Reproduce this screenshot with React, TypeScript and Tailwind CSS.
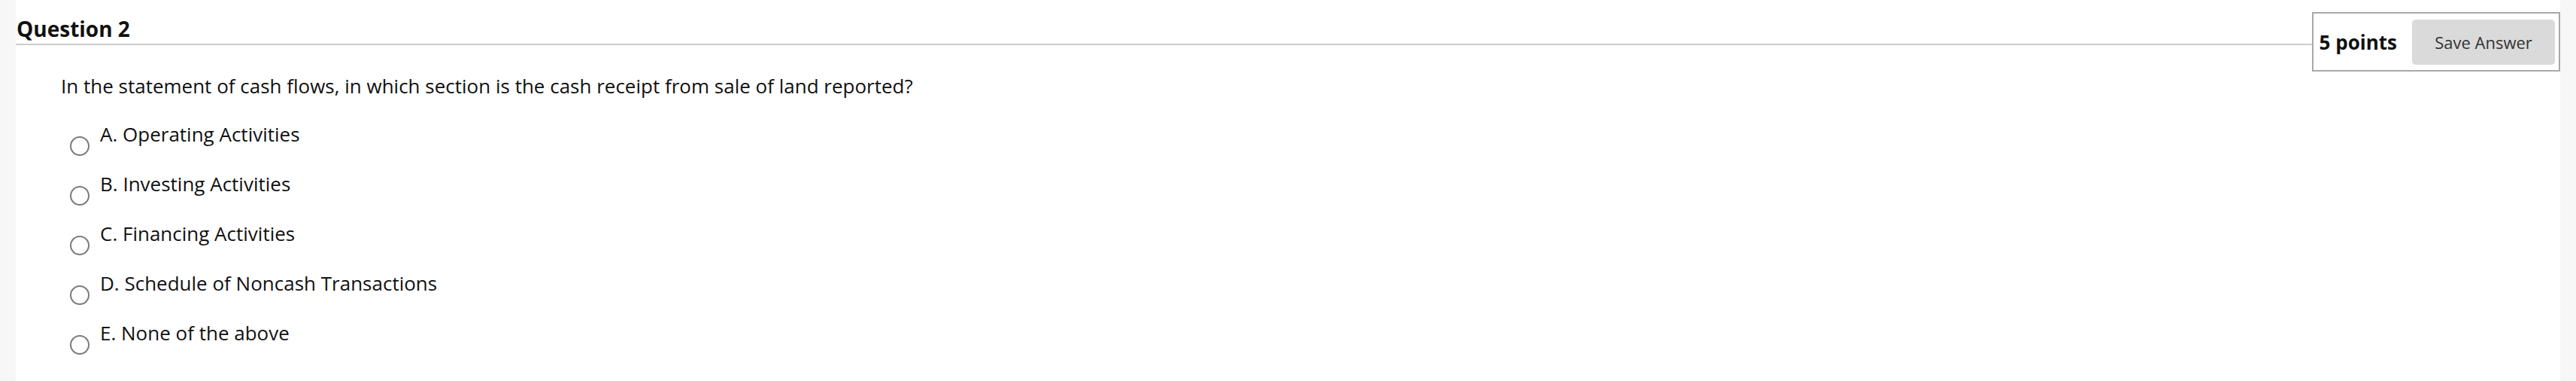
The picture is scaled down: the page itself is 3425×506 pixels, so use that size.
import React from 'react';

const options = [
  'A. Operating Activities',
  'B. Investing Activities',
  'C. Financing Activities',
  'D. Schedule of Noncash Transactions',
  'E. None of the above',
];

const App = () => {
  return (
    <div className="flex w-full h-[506px] bg-[#f7f7f7] text-[#111]" style={{ fontFamily: '"Open Sans", sans-serif' }}>
      <div className="w-[21px] shrink-0" />
      <div className="flex-1 bg-white flex flex-col">
        <div className="flex items-start">
          <div className="flex-1 mt-[19px] pb-[1px] border-b-2 border-[#cccccc] text-[28px] leading-[38px] font-bold pl-px">
            Question 2
          </div>
          <div className="mt-[16px] flex items-center border-2 border-[#a8a8a8] pl-[8px] pr-[5px] pt-[8px] pb-[7px] gap-[20px]">
            <span className="text-[26px] font-bold leading-[36px]">5 points</span>
            <button className="w-[190px] h-[60px] rounded-[5px] bg-[#dadada] text-[22px] text-[#333]">
              Save Answer
            </button>
          </div>
        </div>
        <p className="mt-[2px] pl-[60px] text-[26px] leading-[34px]">
          In the statement of cash flows, in which section is the cash receipt from sale of land reported?
        </p>
        <div className="mt-[30px] pl-[72px] flex flex-col gap-[20px]">
          {options.map(opt => (
            <label key={opt} className="flex items-start">
              <span className="mt-[20px] w-[26px] h-[26px] rounded-full border-2 border-[#7a7a7a] shrink-0" />
              <span className="ml-[14px] text-[26px] leading-[34px]">{opt}</span>
            </label>
          ))}
        </div>
      </div>
      <div className="w-[21px] shrink-0" />
    </div>
  );
};

export default App;
